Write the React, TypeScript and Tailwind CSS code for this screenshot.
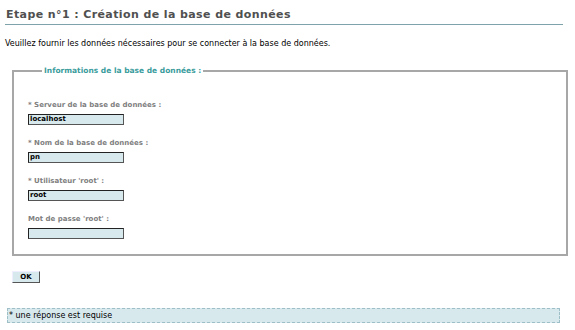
import React from "react";

const font = { fontFamily: '"DejaVu Sans", Verdana, sans-serif' };

function Field({ label, value }: { label: string; value: string }) {
  return (
    <div className="flex flex-col">
      <div className="text-[7px] font-bold text-[#808080] leading-[10px] h-[10px]">{label}</div>
      <div className="mt-[4px] w-[96px] h-[11px] bg-[#d8e9ee] border border-t-[#222] border-l-[#222] border-r-[#555] border-b-[#555] text-[7px] font-bold text-black leading-[9px] pl-[1px]">
        {value}
      </div>
    </div>
  );
}

export default function App() {
  return (
    <div className="w-[575px] h-[330px] bg-white relative" style={font}>
      <div className="pt-[8px] pl-[5px]">
        <div className="w-[558px] border-b border-[#7fa3ab] pb-[2px] pl-[1px] text-[11px] leading-[14px] font-bold text-[#505050] tracking-[0.4px]">
          Etape n°1 : Création de la base de données
        </div>
        <div className="mt-[14px] text-[8px] leading-[10px] text-black">
          Veuillez fournir les données nécessaires pour se connecter à la base de données.
        </div>
      </div>
      <fieldset className="ml-[12px] mt-[17px] w-[556px] h-[190px] border-2 border-[#a7a7a7] pl-[14px] pt-[0px]">
        <legend className="ml-[14px] px-[2px] text-[7.5px] font-bold text-[#3a9c9c] leading-[10px]">
          Informations de la base de données :
        </legend>
        <div className="flex flex-col gap-[13px] mt-[24px]">
          <Field label="* Serveur de la base de données :" value="localhost" />
          <Field label="* Nom de la base de données :" value="pn" />
          <Field label="* Utilisateur 'root' :" value="root" />
          <Field label="Mot de passe 'root' :" value="" />
        </div>
      </fieldset>
      <div className="ml-[12px] mt-[15px] w-[28px] h-[12px] bg-[#d8e9ee] border border-t-[#eef] border-l-[#eef] border-r-[#555] border-b-[#555] text-[7px] font-bold text-black flex items-center justify-center leading-none">
        OK
      </div>
      <div className="ml-[7px] mt-[25px] w-[553px] h-[15px] bg-[#d8e9ee] border border-dashed border-[#9fbfc8] text-[8px] text-black leading-[13px] pl-[1px]">
        * une réponse est requise
      </div>
    </div>
  );
}
